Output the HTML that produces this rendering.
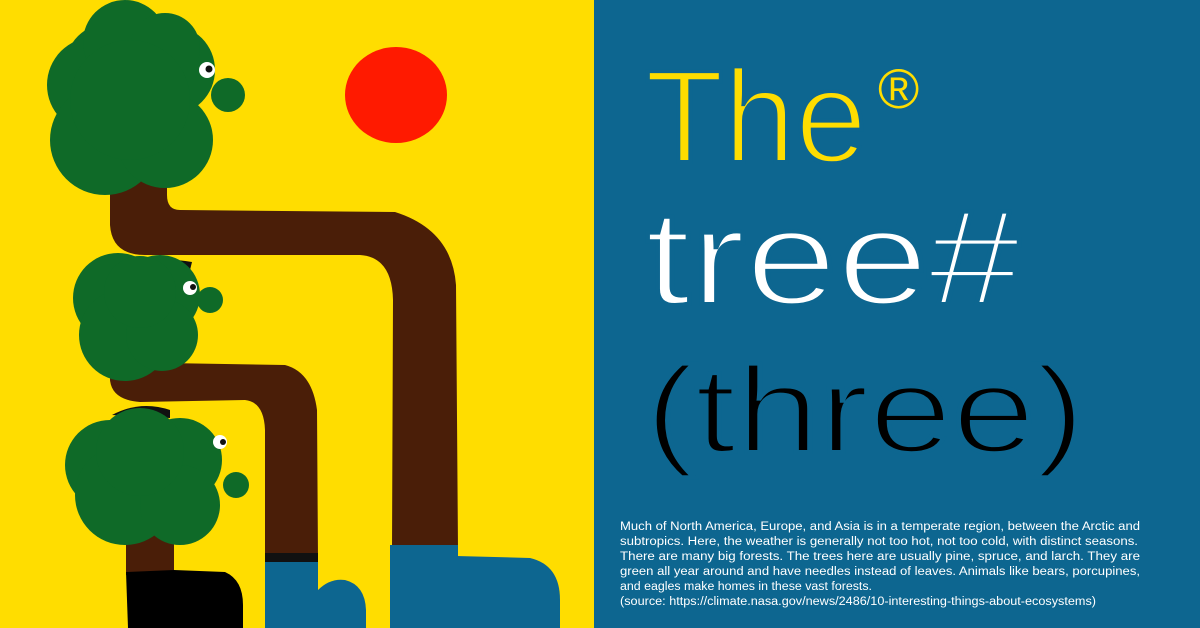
<!DOCTYPE html>
<html><head><meta charset="utf-8"><style>
html,body{margin:0;padding:0;width:1200px;height:628px;overflow:hidden;background:#0d6690}
svg{display:block}
.t{font-family:"Liberation Sans",sans-serif}
</style></head><body>
<svg width="1200" height="628" viewBox="0 0 1200 628" xmlns="http://www.w3.org/2000/svg">
<rect x="0" y="0" width="594" height="628" fill="#ffdd00"/>
<rect x="594" y="0" width="606" height="628" fill="#0d6690"/>
<ellipse cx="396" cy="95" rx="51" ry="48" fill="#ff1a00"/>
<path d="M110 180 L110 225 Q112 255 145 255 L360 255 Q392 257 393 300 L392 550 L458 550 L456 285 Q452 230 395 212 L180 210 Q167 210 167 195 L167 180 Z" fill="#4a1e08"/>
<rect x="390" y="545" width="68" height="83" fill="#0d6690"/>
<path d="M456 556 L530 558 Q560 565 560 600 L560 628 L456 628 Z" fill="#0d6690"/>
<path d="M110 360 L110 380 Q112 400 140 402 L245 400 Q264 402 265 430 L265 560 L318 560 L317 410 Q312 372 285 365 L165 363 L165 360 Z" fill="#4a1e08"/>
<rect x="265" y="553" width="53" height="9" fill="#111"/>
<rect x="265" y="562" width="53" height="66" fill="#0d6690"/>
<path d="M318 590 Q330 578 345 580 Q365 585 366 610 L366 628 L318 628 Z" fill="#0d6690"/>
<rect x="126" y="515" width="48" height="60" fill="#4a1e08"/>
<path d="M126 572 L174 570 L225 572 Q243 580 243 605 L243 628 L128 628 Z" fill="#000"/>
<path d="M115 270 Q150 255 192 262 L190 270 Z" fill="#111"/>
<path d="M112 415 Q140 400 170 410 L170 418 Z" fill="#111"/>
<g fill="#0f6a28">
<circle cx="112" cy="70" r="48"/><circle cx="95" cy="85" r="48"/>
<circle cx="170" cy="70" r="45"/><circle cx="105" cy="140" r="55"/>
<circle cx="165" cy="140" r="48"/><circle cx="125" cy="42" r="42"/>
<circle cx="165" cy="48" r="35"/>
<circle cx="130" cy="100" r="60"/>
<circle cx="228" cy="95" r="17"/>
<circle cx="118" cy="298" r="45"/><circle cx="160" cy="295" r="40"/>
<circle cx="125" cy="335" r="46"/><circle cx="162" cy="335" r="36"/>
<circle cx="140" cy="292" r="36"/>
<circle cx="210" cy="300" r="13"/>
<circle cx="110" cy="465" r="45"/><circle cx="180" cy="460" r="42"/>
<circle cx="125" cy="495" r="50"/><circle cx="180" cy="505" r="40"/>
<circle cx="140" cy="452" r="44"/>
<circle cx="236" cy="485" r="13"/>
</g>
<circle cx="207" cy="70" r="8" fill="#fff"/><circle cx="209" cy="69" r="3.5" fill="#111"/>
<circle cx="190" cy="288" r="7" fill="#fff"/><circle cx="193" cy="287" r="3" fill="#111"/>
<circle cx="220" cy="442" r="7" fill="#fff"/><circle cx="223" cy="442" r="3" fill="#111"/>
<g class="t" stroke="#0d6690" stroke-width="4">
<text x="645" y="162" font-size="132" fill="#ffdd00" textLength="222" lengthAdjust="spacingAndGlyphs">The</text>
<text x="645" y="304" font-size="135" fill="#fff" textLength="375" lengthAdjust="spacingAndGlyphs">tree#</text>
<text x="645" y="452" font-size="122" fill="#000" textLength="440" lengthAdjust="spacingAndGlyphs">(three)</text>
</g>
<text class="t" x="878" y="108" font-size="56" fill="#ffdd00">®</text>
<g class="t" font-size="11.5" fill="#fff">
<text x="620" y="530" textLength="520" lengthAdjust="spacingAndGlyphs">Much of North America, Europe, and Asia is in a temperate region, between the Arctic and</text>
<text x="620" y="545" textLength="518" lengthAdjust="spacingAndGlyphs">subtropics. Here, the weather is generally not too hot, not too cold, with distinct seasons.</text>
<text x="620" y="560" textLength="520" lengthAdjust="spacingAndGlyphs">There are many big forests. The trees here are usually pine, spruce, and larch. They are</text>
<text x="620" y="575" textLength="520" lengthAdjust="spacingAndGlyphs">green all year around and have needles instead of leaves. Animals like bears, porcupines,</text>
<text x="620" y="590" textLength="252" lengthAdjust="spacingAndGlyphs">and eagles make homes in these vast forests.</text>
<text x="620" y="605" textLength="476" lengthAdjust="spacingAndGlyphs">(source: https://climate.nasa.gov/news/2486/10-interesting-things-about-ecosystems)</text>
</g>
</svg>
</body></html>
